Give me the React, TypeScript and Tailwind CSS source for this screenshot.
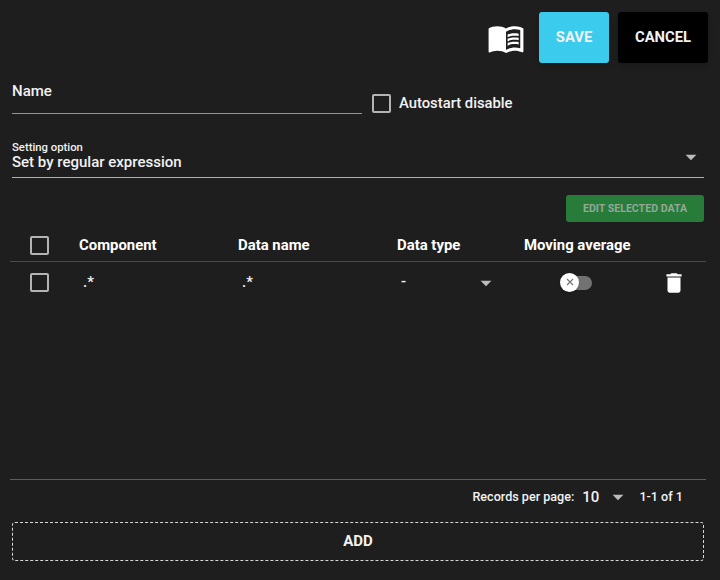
import type { ReactNode } from "react";
import { MdArrowDropDown, MdDelete, MdMenuBook } from "react-icons/md";

const rows = [{ component: ".*", dataName: ".*", dataType: "-" }];

function Checkbox({ label }: { label: string }) {
  return (
    <span
      role="checkbox"
      aria-checked={false}
      aria-label={label}
      className="block size-[19px] shrink-0 rounded-[2px] border-2 border-[#b4b4b4]"
    />
  );
}

function Caret() {
  return <MdArrowDropDown size={26} className="shrink-0 text-[#bcbcbc]" />;
}

function Toggle() {
  return (
    <div role="switch" aria-checked={false} className="flex h-5 w-8 items-center">
      <span className="z-10 flex size-[19px] shrink-0 items-center justify-center rounded-full bg-white shadow-sm">
        <svg viewBox="0 0 8 8" className="mb-px size-2" stroke="#777" strokeWidth="1.2">
          <path d="M1 1l6 6M7 1l-6 6" />
        </svg>
      </span>
      <span className="-ml-3 h-3.5 w-[25px] rounded-r-full bg-[#727272]" />
    </div>
  );
}

function TableRow({ className, children }: { className: string; children: ReactNode }) {
  return (
    <div
      className={`grid grid-cols-[69px_159px_159px_127px_118px_1fr] items-center ${className}`}
    >
      {children}
    </div>
  );
}

export default function App() {
  return (
    <div className="flex h-[580px] w-[720px] flex-col bg-[#1e1e1e] pt-3 pr-4 pl-[10px] font-['Roboto',sans-serif] text-[15px] font-medium text-[#f2f2f2]">
      <header className="-mr-1 flex h-[51px] shrink-0 items-center justify-end">
        <MdMenuBook size={38} className="mr-[14px] text-white" />
        <button
          type="button"
          className="mr-[9px] h-[51px] w-[70px] rounded-[3px] bg-[#3bcbed] text-[14.8px] font-bold shadow-md"
        >
          SAVE
        </button>
        <button
          type="button"
          className="h-[51px] w-[90px] rounded-[3px] bg-black text-[14.8px] font-bold shadow-md"
        >
          CANCEL
        </button>
      </header>

      <div className="ml-0.5 flex h-[51px] shrink-0">
        <div className="h-[51px] w-[350px] border-b border-[#949494] pt-[18px] leading-5">
          Name
        </div>
        <label className="ml-2.5 flex items-center gap-2 pt-[30px]">
          <Checkbox label="Autostart disable" />
          <span className="-mt-0.5 text-[14.8px] leading-5">Autostart disable</span>
        </label>
      </div>

      <div className="mt-[26px] ml-0.5 flex h-[38px] shrink-0 justify-between border-b border-[#b0b0b0]">
        <div>
          <div className="pt-px text-[11.3px] leading-[14px]">Setting option</div>
          <div className="-mt-px leading-4">Set by regular expression</div>
        </div>
        <div className="mt-1">
          <Caret />
        </div>
      </div>

      <button
        type="button"
        disabled
        className="mt-[17px] h-[27px] w-[138px] shrink-0 self-end rounded-[3px] bg-[#267c38] text-[10.6px] font-bold text-[#96a698]"
      >
        EDIT SELECTED DATA
      </button>

      <div className="-mr-0.5 flex h-[258px] shrink-0 flex-col border-b border-[#5c5c5c] pt-[7px]">
        <TableRow className="h-[33px] border-b border-[#4b4b4b] text-[14.9px] font-bold text-white">
          <div className="pl-5">
            <Checkbox label="Select all" />
          </div>
          <div>Component</div>
          <div>Data name</div>
          <div>Data type</div>
          <div>Moving average</div>
        </TableRow>
        {rows.map((row, index) => (
          <TableRow key={index} className="h-[41px]">
            <div className="pl-5">
              <Checkbox label="Select row" />
            </div>
            <div className="pl-1">{row.component}</div>
            <div className="pl-1">{row.dataName}</div>
            <div className="flex items-center justify-between pr-[25px] pl-1">
              <span className="-mt-0.5">{row.dataType}</span>
              <Caret />
            </div>
            <div className="pl-9">
              <Toggle />
            </div>
            <div className="pl-[19px]">
              <MdDelete size={26} className="text-white" />
            </div>
          </TableRow>
        ))}
      </div>

      <footer className="flex h-[34px] shrink-0 items-center justify-end pr-[21px] text-[12.6px]">
        <span>Records per page:</span>
        <span className="ml-2 text-[15px]">10</span>
        <span className="ml-[6px]">
          <Caret />
        </span>
        <span className="ml-2">1-1 of 1</span>
      </footer>

      <button
        type="button"
        className="mt-[8px] ml-0.5 h-[39px] shrink-0 rounded-[3px] border border-dashed border-[#d8d8d8] font-bold"
      >
        ADD
      </button>
    </div>
  );
}
